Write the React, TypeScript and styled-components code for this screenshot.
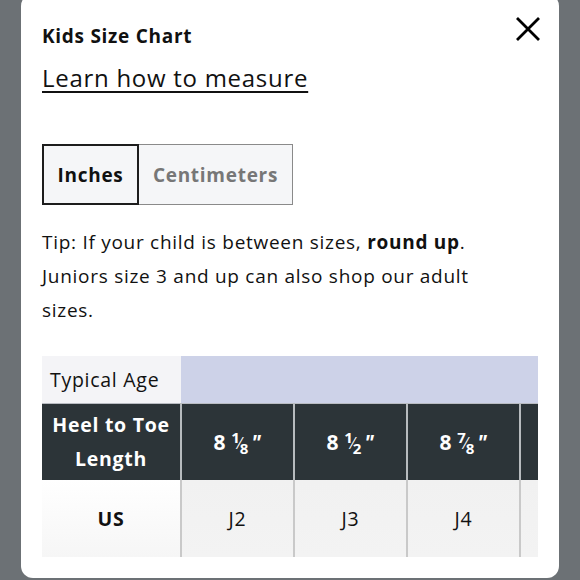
import styled, { createGlobalStyle } from "styled-components";

const Global = createGlobalStyle`
  html, body {
    margin: 0;
    padding: 0;
    background: #6c7175;
    overflow: hidden;
  }
  body {
    font-family: "Open Sans", "Liberation Sans", sans-serif;
    letter-spacing: 0.045em;
    color: #111;
  }
`;

const Page = styled.div`
  width: 580px;
  height: 580px;
  overflow: hidden;
`;

const Modal = styled.div`
  box-sizing: border-box;
  margin: -6px 21px 0;
  width: 538px;
  height: 584px;
  background: #fff;
  border-radius: 12px;
  padding: 29px 21px 0;
`;

const Header = styled.div`
  display: flex;
  justify-content: space-between;
  align-items: flex-start;
`;

const Title = styled.h2`
  margin: 0;
  font-size: 19px;
  line-height: 26px;
  font-weight: 700;
`;

const Close = styled.button`
  border: 0;
  background: none;
  padding: 0;
  margin: -9px -5px 0 0;
  width: 30px;
  height: 30px;
  cursor: pointer;
`;

const MeasureLink = styled.a`
  display: inline-block;
  margin-top: 13px;
  font-size: 24px;
  line-height: 32px;
  color: #111;
  text-decoration: underline;
  text-underline-offset: 4px;
  text-decoration-thickness: 2px;
`;

const Toggle = styled.div`
  display: flex;
  margin-top: 50px;
`;

const UnitButton = styled.button<{ $active?: boolean }>`
  box-sizing: border-box;
  height: 61px;
  width: ${(p) => (p.$active ? "97px" : "154px")};
  padding: 0;
  background: #f5f6f8;
  border: ${(p) => (p.$active ? "2px solid #1d1d1d" : "1.5px solid #8a8a8a")};
  border-left-width: ${(p) => (p.$active ? "2px" : "0")};
  font-family: inherit;
  letter-spacing: inherit;
  font-size: 19px;
  font-weight: 700;
  color: ${(p) => (p.$active ? "#111" : "#777")};
`;

const Tip = styled.p`
  margin: 20px 0 0;
  font-size: 19px;
  line-height: 34px;
`;

const TableWrap = styled.div`
  margin-top: 29px;
  width: 496px;
  overflow: hidden;
`;

const Table = styled.table`
  border-collapse: collapse;
  table-layout: fixed;
  width: 591px;
  font-size: 19.5px;
`;

const AgeRow = styled.tr`
  height: 47px;
  border-bottom: 1px solid #b9bcc2;
`;

const AgeLabel = styled.td`
  background: #f4f4f7;
  padding: 0 8px;
  text-align: left;
`;

const AgeFill = styled.td`
  background: #cdd2e8;
`;

const DarkRow = styled.tr`
  height: 77px;
  background: #2c3438;
  color: #fff;
`;

const DarkCell = styled.th<{ $big?: boolean }>`
  font-weight: 700;
  font-size: ${(p) => (p.$big ? "21px" : "19.5px")};
  line-height: 34px;
  text-align: center;
  border-right: 2px solid #b7bbbe;
`;

const SizeRow = styled.tr`
  height: 77px;
`;

const SizeLabel = styled.th`
  background: linear-gradient(180deg, #ffffff, #f6f6f6);
  font-weight: 700;
  border-right: 2px solid #c9c9c9;
`;

const SizeCell = styled.td`
  background: linear-gradient(180deg, #f1f1f1, #f3f3f3);
  text-align: center;
  border-right: 2px solid #c9c9c9;
`;

const Frac = styled.span`
  display: inline-flex;
  align-items: center;
  margin-left: 5px;
  font-size: 15px;
  line-height: 1;
  letter-spacing: 0;
  vertical-align: middle;
  position: relative;
  top: -1px;
`;

const Num = styled.span`
  position: relative;
  top: -6px;
`;

const Den = styled.span`
  position: relative;
  top: 5px;
`;

const Slash = styled.span`
  font-size: 16px;
  margin: 0 -1px;
  font-weight: 400;
`;

const Quote = styled.span`
  margin-left: 3px;
  font-style: italic;
`;

const Fraction = ({ whole, n, d }: { whole: string; n: string; d: string }) => (
  <>
    {whole}
    <Frac>
      <Num>{n}</Num>
      <Slash>⁄</Slash>
      <Den>{d}</Den>
    </Frac>
    <Quote>"</Quote>
  </>
);

const lengths = [
  { n: "1", d: "8" },
  { n: "1", d: "2" },
  { n: "7", d: "8" },
];

export default function App() {
  return (
    <Page>
      <Global />
      <Modal>
        <Header>
          <Title>Kids Size Chart</Title>
          <Close aria-label="Close">
            <svg width="30" height="30" viewBox="0 0 30 30">
              <path d="M4 4 L26 26 M26 4 L4 26" stroke="#000" strokeWidth="2.8" />
            </svg>
          </Close>
        </Header>
        <MeasureLink href="#">Learn how to measure</MeasureLink>
        <Toggle>
          <UnitButton $active>Inches</UnitButton>
          <UnitButton>Centimeters</UnitButton>
        </Toggle>
        <Tip>
          Tip: If your child is between sizes, <b>round up</b>.
          <br />
          Juniors size 3 and up can also shop our adult
          <br />
          sizes.
        </Tip>
        <TableWrap>
          <Table>
            <colgroup>
              <col style={{ width: 139 }} />
              <col style={{ width: 113 }} />
              <col style={{ width: 113 }} />
              <col style={{ width: 113 }} />
              <col style={{ width: 113 }} />
            </colgroup>
            <tbody>
              <AgeRow>
                <AgeLabel>Typical Age</AgeLabel>
                <AgeFill colSpan={4} />
              </AgeRow>
              <DarkRow>
                <DarkCell>
                  Heel to Toe
                  <br />
                  Length
                </DarkCell>
                {lengths.map((l, i) => (
                  <DarkCell key={i} $big>
                    <Fraction whole="8" n={l.n} d={l.d} />
                  </DarkCell>
                ))}
                <DarkCell />
              </DarkRow>
              <SizeRow>
                <SizeLabel>US</SizeLabel>
                <SizeCell>J2</SizeCell>
                <SizeCell>J3</SizeCell>
                <SizeCell>J4</SizeCell>
                <SizeCell />
              </SizeRow>
            </tbody>
          </Table>
        </TableWrap>
      </Modal>
    </Page>
  );
}
